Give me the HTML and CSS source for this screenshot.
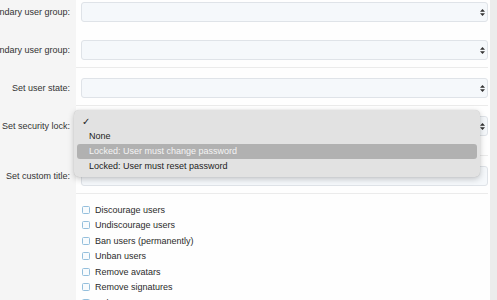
FILE: index.html
```html
<!DOCTYPE html>
<html lang="en">
<head>
  <meta charset="UTF-8">
  <meta name="viewport" content="width=device-width, initial-scale=1.0">
  <title>Batch update users</title>
  <link rel="stylesheet" href="styles.css">
</head>
<body>
  <div class="page">
    <form class="form">

      <div class="row row-first">
        <div class="row-label"><span>Set secondary user group:</span></div>
        <div class="row-field">
          <div class="select-wrap">
            <select class="input"><option></option></select>
            <svg class="arrows" width="5" height="7" viewBox="0 0 5 7"><path d="M2.5 0 L5 2.8 H0 Z M2.5 7 L5 4.2 H0 Z" fill="#333"/></svg>
          </div>
        </div>
      </div>

      <div class="row">
        <div class="row-label"><span>Remove secondary user group:</span></div>
        <div class="row-field">
          <div class="select-wrap">
            <select class="input"><option></option></select>
            <svg class="arrows" width="5" height="7" viewBox="0 0 5 7"><path d="M2.5 0 L5 2.8 H0 Z M2.5 7 L5 4.2 H0 Z" fill="#333"/></svg>
          </div>
        </div>
      </div>

      <div class="row">
        <div class="row-label"><span>Set user state:</span></div>
        <div class="row-field">
          <div class="select-wrap">
            <select class="input"><option></option></select>
            <svg class="arrows" width="5" height="7" viewBox="0 0 5 7"><path d="M2.5 0 L5 2.8 H0 Z M2.5 7 L5 4.2 H0 Z" fill="#333"/></svg>
          </div>
        </div>
      </div>

      <div class="row">
        <div class="row-label"><span>Set security lock:</span></div>
        <div class="row-field row-field-tall">
          <div class="select-wrap">
            <select class="input"><option></option></select>
            <svg class="arrows" width="5" height="7" viewBox="0 0 5 7"><path d="M2.5 0 L5 2.8 H0 Z M2.5 7 L5 4.2 H0 Z" fill="#333"/></svg>

            <!-- open native menu -->
            <ul class="menu">
              <li class="menu-item"><span class="check">&#10003;</span></li>
              <li class="menu-item">None</li>
              <li class="menu-item active">Locked: User must change password</li>
              <li class="menu-item">Locked: User must reset password</li>
            </ul>
          </div>
        </div>
      </div>

      <div class="row">
        <div class="row-label"><span>Set custom title:</span></div>
        <div class="row-field">
          <div class="select-wrap">
            <input type="text" class="input">
          </div>
        </div>
      </div>

      <div class="row">
        <div class="row-label"></div>
        <div class="row-field row-field-checks">
          <label class="check-row"><span class="box"></span>Discourage users</label>
          <label class="check-row"><span class="box"></span>Undiscourage users</label>
          <label class="check-row"><span class="box"></span>Ban users (permanently)</label>
          <label class="check-row"><span class="box"></span>Unban users</label>
          <label class="check-row"><span class="box"></span>Remove avatars</label>
          <label class="check-row"><span class="box"></span>Remove signatures</label>
          <label class="check-row"><span class="box"></span>Delete users</label>
        </div>
      </div>

    </form>
  </div>
</body>
</html>
```

FILE: styles.css
```css
body {
  margin: 0;
  font-family: "Liberation Sans", Arial, Helvetica, sans-serif;
  font-size: 9px;
  color: #2b2b2b;
  background-color: #ececec;
  overflow: hidden;
}

.page {
  width: 490px;
  height: 300px;
  background-color: #fefefe;
  overflow: hidden;
}

.form {
  margin: 0;
}

.row {
  display: grid;
  grid-template-columns: 76px 1fr;
}

.row-label {
  display: flex;
  justify-content: flex-end;
  align-items: flex-start;
  background-color: #f5f5f5;
  padding: 10px 6px 0 0;
  line-height: 20px;
  white-space: nowrap;
  overflow: hidden;
  color: #333;
}

.row-label span {
  flex-shrink: 0;
}

.row-field {
  margin-right: 2px;
  padding: 10px 0 7px 5px;
  border-bottom: 1px solid #ebebeb;
}

.row-first .row-label,
.row-first .row-field {
  padding-top: 2px;
}

.row-first .row-field {
  border-bottom: none;
  padding-bottom: 8px;
}

.row-field-tall {
  padding-bottom: 19px;
}

.select-wrap {
  position: relative;
}

.input {
  display: block;
  box-sizing: border-box;
  width: 100%;
  height: 20px;
  margin: 0;
  padding: 0 4px;
  border: 1px solid #dfe3e8;
  border-radius: 3px;
  background-color: #f5f8fb;
  font: inherit;
  -webkit-appearance: none;
  appearance: none;
}

.arrows {
  position: absolute;
  right: 3px;
  top: 7px;
}

.menu {
  position: absolute;
  left: -7px;
  top: -6px;
  width: 406px;
  margin: 0;
  padding: 4px 3px 3px;
  list-style: none;
  box-sizing: border-box;
  background-color: #e2e2e2;
  border-radius: 5px;
  box-shadow: 0 2px 6px rgba(0, 0, 0, 0.22), 0 0 1px rgba(0, 0, 0, 0.2);
  z-index: 10;
}

.menu-item {
  height: 15px;
  line-height: 15px;
  padding-left: 12px;
  border-radius: 3px;
  color: #222;
}

.menu-item.active {
  background-color: #b1b1b1;
  color: #f4f4f4;
}

.check {
  margin-left: -7px;
  font-family: "DejaVu Sans", sans-serif;
  font-size: 10px;
}

.row-field-checks {
  border-bottom: none;
  padding: 8px 0 0 6px;
}

.check-row {
  display: flex;
  align-items: center;
  gap: 5px;
  height: 15.5px;
  color: #2b2b2b;
}

.box {
  box-sizing: border-box;
  width: 8px;
  height: 8px;
  border: 1px solid #94bfdc;
  border-radius: 1.5px;
  background-color: #f8fbfd;
}
```
